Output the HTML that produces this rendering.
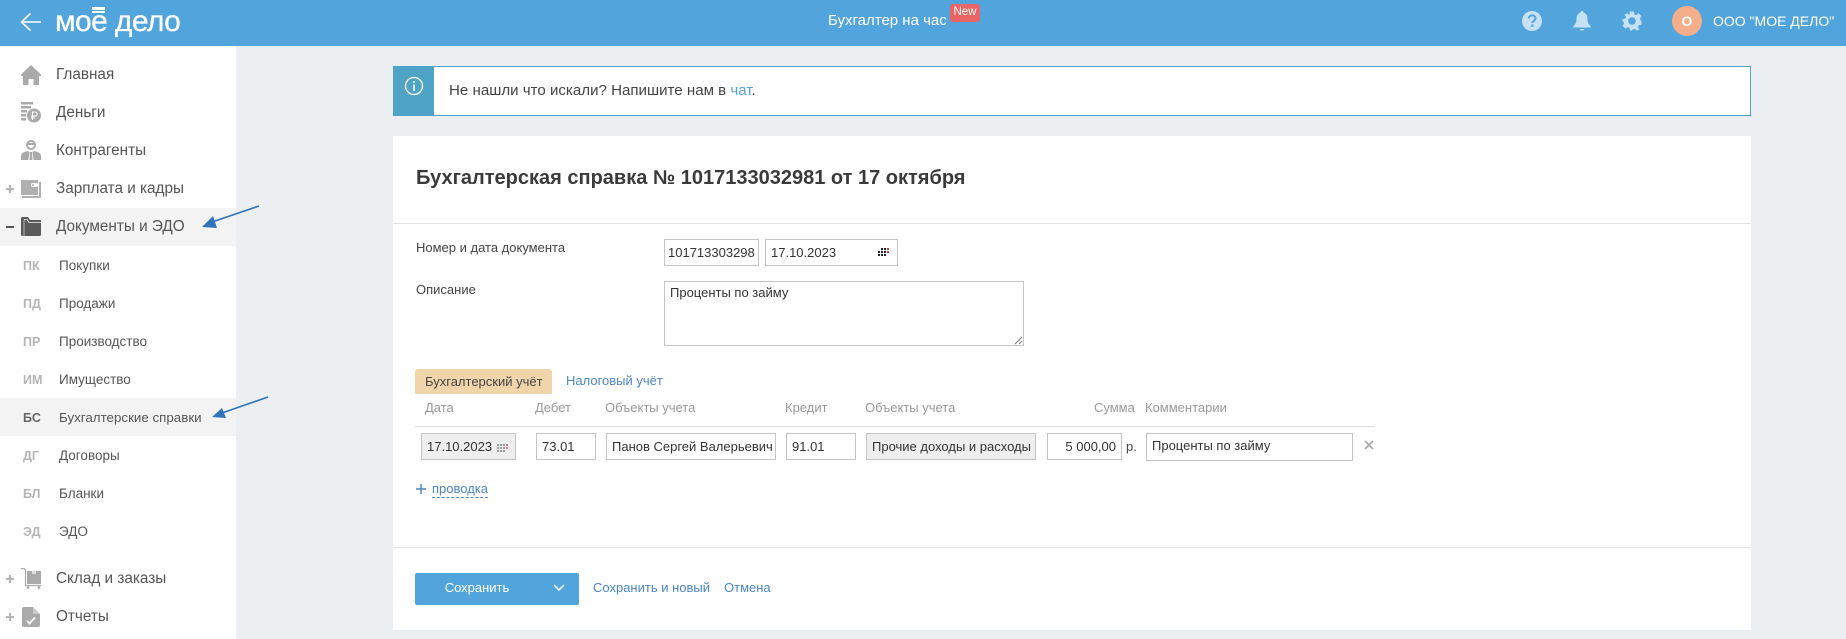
<!DOCTYPE html>
<html lang="ru"><head><meta charset="utf-8"><title>Бухгалтерская справка</title>
<style>
*{box-sizing:border-box}
html,body{margin:0;padding:0}
body{width:1846px;height:639px;position:relative;overflow:hidden;background:#ebeff2;font-family:"Liberation Sans",Arial,sans-serif;color:#444}
.a{position:absolute;white-space:nowrap}
.m{left:56px;font-size:15.3px;height:38px;line-height:38px;color:#555}
.s{left:59px;font-size:13.5px;height:38px;line-height:38px;color:#555}
.ab{left:23px;font-size:12.5px;font-weight:bold;height:38px;line-height:38px;color:#b5b5b5}
.pl{left:6px;width:8px;height:2px;background:#b5b5b5}
.pv{left:9px;width:2px;height:8px;background:#b5b5b5}
.i{position:absolute;background:#fff;border:1px solid #c4c4c4;font-size:13px;line-height:25px;padding-left:5px;color:#333;overflow:hidden;white-space:nowrap}
.g{background:#eee}
.h{font-size:13px;color:#999;top:400px;line-height:16px}
.lnk{color:#4b86c5;font-size:13px}
svg{position:absolute;display:block}
</style></head><body>
<div class="a" style="left:0;top:0;width:1846px;height:46px;background:#52a5dc"></div>
<svg style="left:20px;top:10px" width="24" height="24" viewBox="0 0 24 24"><path d="M21 12H1.5M10.5 3.5L1.5 12l9 8.5" fill="none" stroke="#fff" stroke-width="1.6"/></svg>
<div class="a" style="left:55px;top:2px;font-size:30px;line-height:40px;color:#fff;letter-spacing:-.6px;-webkit-text-stroke:.3px #fff">мое дело</div>
<div class="a" style="left:92px;top:7px;width:13px;height:2.5px;background:#fff"></div>
<div class="a" style="left:92px;top:11px;width:13px;height:2px;background:#fff"></div>
<div class="a" style="left:828px;top:11px;font-size:15px;line-height:20px;color:#fff">Бухгалтер на час</div>
<div class="a" style="left:950px;top:4px;width:30px;height:18px;background:#e96464;border-radius:3px;color:#fff;font-size:11.500px;line-height:17px;text-align:center">New</div>
<svg style="left:1521px;top:10px" width="22" height="22" viewBox="0 0 22 22"><circle cx="11" cy="11" r="10" fill="#c6e1f5"/><path d="M7.6 8.4c.2-2 1.700-3 3.500-3 2 0 3.400 1.200 3.400 2.900 0 2.500-3.200 2.500-3.200 4.700" fill="none" stroke="#52a5dc" stroke-width="2"/><rect x="10.200" y="14.500" width="2.200" height="2.300" fill="#52a5dc"/></svg>
<svg style="left:1573px;top:10px" width="18" height="22" viewBox="0 0 18 22"><path d="M9 1c1 0 1.500.7 1.500 1.500C13.500 3.500 14.500 6 14.500 9c0 3.500 1 5 3 7v1.500H.5V16c2-2 3-3.500 3-7 0-3 1-5.500 4-6.500C7.500 1.700 8 1 9 1z" fill="#c6e1f5"/><rect x="7" y="19" width="4" height="1.500" rx=".7" fill="#c6e1f5"/></svg>
<svg style="left:1622px;top:11px" width="20" height="20" viewBox="0 0 20 20"><path d="M8 0h4l.6 3 1.900.8L17.100 2 20 5l-1.800 2.500.8 1.900 1 .6v4l-3 .6-.8 1.900 1.800 2.500-3 1-2.500-1.800-1.900.8L10.100 20H8l-.6-2.700-1.900-.8L3 18l-3-3 1.800-2.500L1 10.600 0 10V8l3-.6.8-1.900L2 3l3-1 2.500 1.800L7.400.9z" fill="#c6e1f5" transform="translate(10 10) scale(.95) translate(-10 -10)"/><circle cx="10" cy="10" r="3.800" fill="#52a5dc"/></svg>
<div class="a" style="left:1672px;top:6px;width:30px;height:30px;border-radius:50%;background:#f4ae8a;color:#fff;font-weight:bold;font-size:14px;line-height:30px;text-align:center">О</div>
<div class="a" style="left:1713px;top:11px;font-size:14px;line-height:20px;color:#fff">ООО "МОЕ ДЕЛО"</div>

<div class="a" style="left:0;top:46px;width:236px;height:593px;background:#fff"></div>
<div class="a" style="left:0;top:208px;width:236px;height:38px;background:#f3f3f4"></div>
<div class="a" style="left:0;top:398px;width:236px;height:38px;background:#f3f3f4"></div>

<svg style="left:21px;top:65px" width="20" height="20" viewBox="0 0 20 20"><path d="M10 0L20 9.500v1.500h-2v9h-5.500v-6h-5v6H2v-9H0V9.500z" fill="#aaa"/></svg>
<svg style="left:21px;top:102px" width="20" height="21" viewBox="0 0 20 21"><path d="M0 0h12v2.500H0zM0 4h10v2.500H0zM0 8h6v2.500H0zM0 12h5v2.500H0zM0 16h5v2.500H0z" fill="#aaa"/><circle cx="13" cy="13.500" r="7" fill="#aaa"/><path d="M11.500 18v-8h2.500a2 2 0 0 1 0 4.200h-4M10 16h4" stroke="#fff" stroke-width="1.100" fill="none"/></svg>
<svg style="left:21px;top:140px" width="20" height="21" viewBox="0 0 20 21"><circle cx="10" cy="5" r="4" fill="none" stroke="#aaa" stroke-width="2"/><path d="M6 3h8v2H6z" fill="#aaa"/><path d="M0 20v-4c0-3 3-4 6.500-5l2 1-1 8zM20 20v-4c0-3-3-4-6.500-5l-2 1 1 8zM9 12h2l.5 8h-3z" fill="#aaa"/></svg>
<svg style="left:21px;top:180px" width="20" height="18" viewBox="0 0 20 18"><rect x="0" y="0" width="17" height="15" fill="#b0b0b0"/><rect x="18" y="2" width="2" height="16" fill="#b0b0b0"/><rect x="1" y="16" width="19" height="2" fill="#b0b0b0"/><rect x="10" y="3" width="7" height="4" rx="2" fill="#fff"/><circle cx="12" cy="5" r="1" fill="#b0b0b0"/></svg>
<svg style="left:21px;top:217px" width="20" height="19" viewBox="0 0 20 19"><path d="M0 1.500A1.500 1.500 0 0 1 1.500 0H7l2 3h11v14.500a1.500 1.500 0 0 1-1.500 1.500H1.500A1.500 1.500 0 0 1 0 17.500z" fill="#5a5a5a"/><path d="M3 2.500h3l2 3h12" fill="none" stroke="#f3f3f4" stroke-width=".8"/><path d="M3 3v16" stroke="#f3f3f4" stroke-width=".6"/></svg>
<svg style="left:21px;top:568px" width="20" height="21" viewBox="0 0 20 21"><path d="M0 .5h3l1.500 1.500v15.500H20" fill="none" stroke="#aaa" stroke-width="1.200"/><rect x="6" y="3" width="14" height="13" fill="#aaa"/><rect x="11" y="3" width="4" height="3" fill="#ddd"/><circle cx="7" cy="19.500" r="1.400" fill="#aaa"/><circle cx="18" cy="19.500" r="1.400" fill="#aaa"/></svg>
<svg style="left:22px;top:607px" width="18" height="20" viewBox="0 0 18 20"><path d="M2 0h9l7 7v11a2 2 0 0 1-2 2H2a2 2 0 0 1-2-2V2a2 2 0 0 1 2-2z" fill="#aaa"/><path d="M11 0v7h7" fill="#ccc"/><path d="M5 14l2.500 2.500L13 10.500" fill="none" stroke="#fff" stroke-width="1.800"/></svg>

<div class="a m" style="top:55.500px">Главная</div>
<div class="a m" style="top:93.500px">Деньги</div>
<div class="a m" style="top:131.500px">Контрагенты</div>
<div class="a m" style="top:169.500px">Зарплата и кадры</div>
<div class="a m" style="top:207.500px">Документы и ЭДО</div>
<div class="a m" style="top:559.500px">Склад и заказы</div>
<div class="a m" style="top:597.500px">Отчеты</div>
<div class="a pl" style="top:188px"></div><div class="a pv" style="top:185px"></div>
<div class="a pl" style="top:226px;background:#555"></div>
<div class="a pl" style="top:578px"></div><div class="a pv" style="top:575px"></div>
<div class="a pl" style="top:616px"></div><div class="a pv" style="top:613px"></div>

<div class="a ab" style="top:247px">ПК</div><div class="a s" style="top:247px">Покупки</div>
<div class="a ab" style="top:285px">ПД</div><div class="a s" style="top:285px">Продажи</div>
<div class="a ab" style="top:323px">ПР</div><div class="a s" style="top:323px">Производство</div>
<div class="a ab" style="top:361px">ИМ</div><div class="a s" style="top:361px">Имущество</div>
<div class="a ab" style="top:399px;color:#666">БС</div><div class="a s" style="top:399px;font-size:13.35px">Бухгалтерские справки</div>
<div class="a ab" style="top:437px">ДГ</div><div class="a s" style="top:437px">Договоры</div>
<div class="a ab" style="top:475px">БЛ</div><div class="a s" style="top:475px">Бланки</div>
<div class="a ab" style="top:513px">ЭД</div><div class="a s" style="top:513px">ЭДО</div>

<svg style="left:200px;top:200px" width="80" height="225" viewBox="0 0 80 225"><path d="M59 6L12 22" stroke="#2f75bb" stroke-width="1.700" fill="none"/><path d="M2 27l11-11 4 12z" fill="#2f75bb"/><path d="M68 197L22 213" stroke="#2f75bb" stroke-width="1.700" fill="none"/><path d="M12 217l10-9 4 10z" fill="#2f75bb"/></svg>

<div class="a" style="left:393px;top:66px;width:1358px;height:50px;background:#fff;border:1px solid #4fa3c7"></div>
<div class="a" style="left:393px;top:66px;width:41px;height:50px;background:#4fa3c7"></div>
<svg style="left:404px;top:76px" width="20" height="20" viewBox="0 0 20 20"><circle cx="10" cy="10" r="8.500" fill="none" stroke="#fff" stroke-width="1.300"/><rect x="9.200" y="8.500" width="1.600" height="6.500" fill="#fff"/><rect x="9.200" y="5" width="1.600" height="1.800" fill="#fff"/></svg>
<div class="a" style="left:449px;top:81px;font-size:15.100px;line-height:20px;color:#444">Не нашли что искали? Напишите нам в <span style="color:#5aa3d8">чат</span>.</div>

<div class="a" style="left:393px;top:136px;width:1358px;height:494px;background:#fff"></div>
<div class="a" style="left:393px;top:223px;width:1358px;height:1px;background:#e2e2e2"></div>
<div class="a" style="left:393px;top:547px;width:1358px;height:1px;background:#e2e2e2"></div>
<div class="a" style="left:416px;top:166px;font-size:20px;font-weight:bold;line-height:24px;color:#3a3a3a">Бухгалтерская справка № 1017133032981 от 17 октября</div>

<div class="a" style="left:416px;top:240px;font-size:13px;line-height:16px">Номер и дата документа</div>
<div class="a" style="left:416px;top:282px;font-size:13px;line-height:16px">Описание</div>
<div class="i" style="left:664px;top:239px;width:95px;height:27px;padding:0"><div style="position:absolute;left:3px;top:0;width:87px;overflow:hidden">1017133032981</div></div>
<div class="i" style="left:765px;top:239px;width:133px;height:27px">17.10.2023</div>
<svg style="left:878px;top:247px" width="11" height="11" viewBox="0 0 11 11"><path d="M3 1h2v2H3zM6 1h2v2H6zM0 4h2v2H0zM3 4h2v2H3zM6 4h2v2H6zM0 7h2v2H0zM3 7h2v2H3zM6 7h2v2H6z" fill="#222"/><path d="M9 1h2v2H9zM9 4h2v2H9z" fill="#d33"/></svg>
<div class="i" style="left:664px;top:281px;width:360px;height:65px;line-height:16px;padding-top:3px">Проценты по займу</div>
<svg style="left:1013px;top:335px" width="10" height="10" viewBox="0 0 10 10"><path d="M9 2L2 9M9 6L6 9" stroke="#777" stroke-width="1"/></svg>

<div class="a" style="left:415px;top:369px;width:137px;height:25px;background:#efd5a9;border-radius:3px 3px 0 0;font-size:13px;line-height:25px;padding-left:10px;color:#444">Бухгалтерский учёт</div>
<div class="a lnk" style="left:566px;top:373px;line-height:16px">Налоговый учёт</div>

<div class="a h" style="left:425px">Дата</div>
<div class="a h" style="left:535px">Дебет</div>
<div class="a h" style="left:605px">Объекты учета</div>
<div class="a h" style="left:785px">Кредит</div>
<div class="a h" style="left:865px">Объекты учета</div>
<div class="a h" style="left:1094px">Сумма</div>
<div class="a h" style="left:1145px">Комментарии</div>
<div class="a" style="left:415px;top:426px;width:960px;height:1px;background:#dedede"></div>

<div class="i g" style="left:421px;top:433px;width:95px;height:27px">17.10.2023</div>
<svg style="left:497px;top:443px" width="11" height="9" viewBox="0 0 11 9"><path d="M0 1h2v2H0zM3 1h2v2H3zM6 1h2v2H6zM0 4h2v2H0zM3 4h2v2H3zM6 4h2v2H6zM0 7h2v2H0zM3 7h2v2H3zM6 7h2v2H6z" fill="#999"/><path d="M9 1h2v2H9zM9 4h2v2H9z" fill="#e07a8a"/></svg>
<div class="i" style="left:536px;top:433px;width:60px;height:27px">73.01</div>
<div class="i" style="left:606px;top:433px;width:170px;height:27px">Панов Сергей Валерьевич</div>
<div class="i" style="left:786px;top:433px;width:70px;height:27px">91.01</div>
<div class="i g" style="left:866px;top:433px;width:170px;height:27px">Прочие доходы и расходы</div>
<div class="i" style="left:1047px;top:433px;width:75px;height:27px;text-align:right;padding:0 5px 0 0">5 000,00</div>
<div class="a" style="left:1126px;top:439px;font-size:13px;line-height:16px">р.</div>
<div class="i" style="left:1146px;top:433px;width:207px;height:28px;line-height:23px">Проценты по займу</div>
<svg style="left:1364px;top:440px" width="10" height="10" viewBox="0 0 10 10"><path d="M1 1l8 8M9 1l-8 8" stroke="#aaa" stroke-width="1.700"/></svg>

<svg style="left:416px;top:484px" width="10" height="10" viewBox="0 0 10 10"><path d="M5 0v10M0 5h10" stroke="#4b86c5" stroke-width="1.500"/></svg>
<div class="a lnk" style="left:432px;top:481px;line-height:16px;border-bottom:1px dashed #4b86c5">проводка</div>

<div class="a" style="left:415px;top:573px;width:164px;height:32px;background:#52a5dc;border-radius:2px"></div>
<div class="a" style="left:538px;top:573px;width:1px;height:32px;background:#50a2d8"></div>
<div class="a" style="left:415px;top:572px;width:123px;height:32px;color:#fff;font-size:13px;line-height:32px;text-align:center;padding-left:1px">Сохранить</div>
<svg style="left:553px;top:584px" width="12" height="8" viewBox="0 0 12 8"><path d="M1 1l5 5 5-5" fill="none" stroke="#fff" stroke-width="1.500"/></svg>
<div class="a lnk" style="left:593px;top:579px;line-height:18px">Сохранить и новый</div>
<div class="a lnk" style="left:724px;top:579px;line-height:18px">Отмена</div>
</body></html>
